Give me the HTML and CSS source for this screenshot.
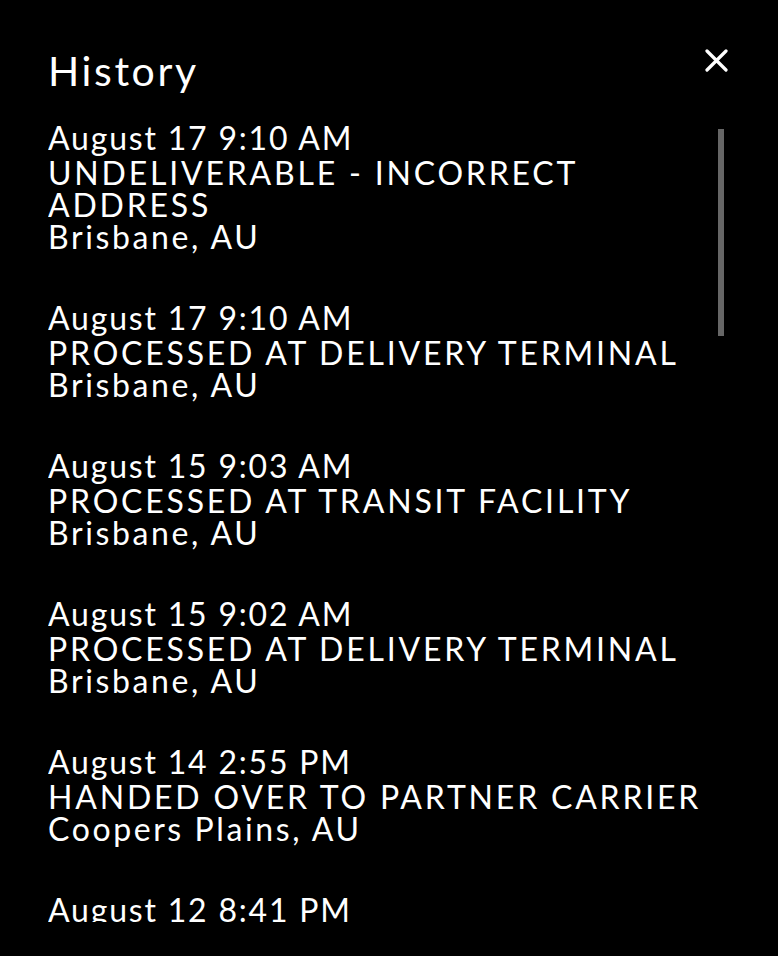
FILE: index.html
```html
<!DOCTYPE html>
<html lang="en">
<head>
    <meta charset="UTF-8">
    <meta name="viewport" content="width=device-width, initial-scale=1.0">
    <title>History</title>
    <link rel="stylesheet" href="styles.css">
</head>
<body>
    <div class="panel">
        <div class="panel-header">
            <h1>History</h1>
            <button class="close-btn" aria-label="Close">
                <svg width="23" height="23" viewBox="0 0 23 23">
                    <path d="M2 2 L21 21 M21 2 L2 21" stroke="#fff" stroke-width="3.2" stroke-linecap="round"/>
                </svg>
            </button>
        </div>

        <!-- Tracking events -->
        <div class="history">
            <div class="events">
                <div class="event">
                    <div class="event-date">August 17 9:10 AM</div>
                    <div class="event-status">UNDELIVERABLE - INCORRECT ADDRESS</div>
                    <div class="event-place">Brisbane, AU</div>
                </div>
                <div class="event">
                    <div class="event-date">August 17 9:10 AM</div>
                    <div class="event-status">PROCESSED AT DELIVERY TERMINAL</div>
                    <div class="event-place">Brisbane, AU</div>
                </div>
                <div class="event">
                    <div class="event-date">August 15 9:03 AM</div>
                    <div class="event-status">PROCESSED AT TRANSIT FACILITY</div>
                    <div class="event-place">Brisbane, AU</div>
                </div>
                <div class="event">
                    <div class="event-date">August 15 9:02 AM</div>
                    <div class="event-status">PROCESSED AT DELIVERY TERMINAL</div>
                    <div class="event-place">Brisbane, AU</div>
                </div>
                <div class="event">
                    <div class="event-date">August 14 2:55 PM</div>
                    <div class="event-status">HANDED OVER TO PARTNER CARRIER</div>
                    <div class="event-place">Coopers Plains, AU</div>
                </div>
                <div class="event">
                    <div class="event-date">August 12 8:41 PM</div>
                </div>
            </div>
            <div class="scroll-thumb"></div>
        </div>
    </div>
</body>
</html>
```

FILE: styles.css
```css
body {
    margin: 0;
    padding: 0;
    background-color: #000;
    color: #fff;
    font-family: Lato, "Noto Sans", sans-serif;
}

.panel {
    padding: 47px 50px 0 48px;
}

.panel-header {
    display: flex;
    justify-content: space-between;
    align-items: flex-start;
}

h1 {
    margin: 0;
    font-size: 41px;
    line-height: 48px;
    font-weight: 400;
    letter-spacing: 2.6px;
}

.close-btn {
    margin-top: 2px;
    padding: 0;
    width: 23px;
    height: 23px;
    background: none;
    border: none;
    cursor: pointer;
}

.close-btn svg {
    display: block;
}

.history {
    position: relative;
    margin-top: 27px;
}

.events {
    height: 800px;
    overflow: hidden;
    padding-right: 16px;
    display: flex;
    flex-direction: column;
    gap: 49px;
    font-size: 32px;
    line-height: 32px;
    letter-spacing: 2.6px;
}

.event-date {
    margin-bottom: 3px;
    letter-spacing: 1.8px;
}

.event-status {
    letter-spacing: 2.8px;
}

/* Scroll indicator */
.scroll-thumb {
    position: absolute;
    top: 7px;
    right: 4px;
    width: 6px;
    height: 207px;
    background-color: #666;
}
```
